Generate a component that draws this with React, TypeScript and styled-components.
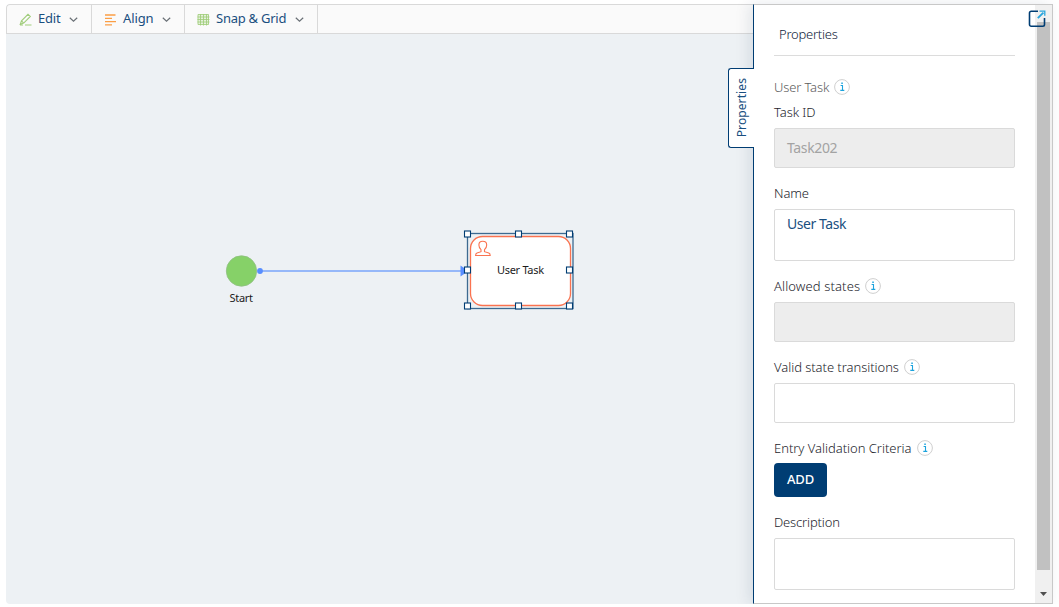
import React from "react";
import styled, { createGlobalStyle } from "styled-components";

const NAVY = "#003d73";

const GlobalStyle = createGlobalStyle`
  * { box-sizing: border-box; }
  body { margin: 0; background: #fff; font-family: "Noto Sans", sans-serif; font-weight: 300; overflow: hidden; }
`;

const Frame = styled.div`
  display: flex;
  width: 1047px;
  height: 600px;
  margin: 4px 0 0 6px;
`;

const Workspace = styled.main`
  flex: 1;
  display: flex;
  flex-direction: column;
  background: #edf1f4;
  border-radius: 4px 0 0 4px;
  overflow: hidden;
`;

const Toolbar = styled.div`
  display: flex;
  height: 30px;
  background: #fafafa;
  border: 1px solid #d9d9d9;
  border-right: 0;
  border-radius: 4px 0 0 0;
`;

const ToolButton = styled.button<{ $width: number }>`
  display: flex;
  align-items: center;
  width: ${(p) => p.$width}px;
  padding: 0 0 0 12px;
  border: 0;
  border-right: 1px solid #d9d9d9;
  background: none;
  font: 400 13px/20px "Noto Sans", sans-serif;
  color: #1a4f80;
`;

const ToolLabel = styled.span<{ $spacing: number; $width: number }>`
  width: ${(p) => p.$width}px;
  margin: 0 8px 2px 6px;
  white-space: nowrap;
  text-align: left;
  letter-spacing: ${(p) => p.$spacing}px;
`;

const Canvas = styled.div`
  position: relative;
  flex: 1;
`;

const Diagram = styled.svg`
  display: block;
  width: 747px;
  height: 570px;
  font-family: "Noto Sans", sans-serif;
  font-weight: 400;
`;

const PanelShell = styled.div`
  position: relative;
  display: flex;
  width: 300px;
`;

const Panel = styled.aside`
  display: flex;
  width: 300px;
  background: #fff;
  border: 1px solid #c8c8c8;
  border-left-color: ${NAVY};
  box-shadow: -4px 0 14px rgba(0, 40, 80, 0.1);
`;

const SideTab = styled.div`
  position: absolute;
  left: -25px;
  top: 64px;
  width: 26px;
  height: 80px;
  display: flex;
  align-items: center;
  justify-content: center;
  background: #fff;
  border: 1px solid ${NAVY};
  border-right: 0;
  border-radius: 3px 0 0 3px;
  writing-mode: vertical-rl;
  color: #1a4f80;
  font-size: 12px;
  font-weight: 400;
`;

const SideTabText = styled.span`
  transform: rotate(180deg);
  letter-spacing: 0.1px;
`;

const Content = styled.div`
  display: flex;
  flex-direction: column;
  width: 281px;
  padding: 0 20px;
`;

const Heading = styled.h2`
  flex-shrink: 0;
  margin: 0 0 21px;
  height: 51px;
  padding: 19px 0 0 5px;
  border-bottom: 1px solid #dcdcdc;
  font-size: 13px;
  font-weight: 300;
  line-height: 20px;
  letter-spacing: -0.25px;
  color: #10223a;
`;

const Field = styled.div<{ $gap?: number }>`
  display: flex;
  flex-direction: column;
  flex-shrink: 0;
  align-items: flex-start;
  gap: ${(p) => p.$gap ?? 6}px;
  margin-bottom: 15px;

  &:last-child {
    margin-bottom: 0;
  }
`;

const Label = styled.div<{ $spacing?: number; $muted?: boolean }>`
  display: flex;
  align-items: center;
  gap: 5px;
  height: 20px;
  font-size: 13px;
  white-space: nowrap;
  letter-spacing: ${(p) => p.$spacing ?? 0}px;
  color: ${(p) => (p.$muted ? "#5c5c5c" : "#1d242c")};
`;

const LabelText = styled.span`
  line-height: 18px;
  margin-bottom: 1px;
`;

const Kind = styled.div`
  margin-bottom: 5px;
`;

const Box = styled.div<{ $tall?: boolean; $disabled?: boolean; $spacing?: number }>`
  width: 241px;
  height: ${(p) => (p.$tall ? 52 : 40)}px;
  padding: ${(p) => (p.$tall ? 4 : 9)}px 12px;
  border: 1px solid #dadada;
  border-radius: 2px;
  background: ${(p) => (p.$disabled ? "#ededed" : "#fff")};
  color: ${(p) => (p.$disabled ? "#a3a3a3" : "#1a4f80")};
  font-size: 14px;
  font-weight: 400;
  line-height: 20px;
  letter-spacing: ${(p) => p.$spacing ?? 0}px;
`;

const AddButton = styled.button`
  width: 53px;
  height: 34px;
  padding: 0 0 2px;
  border: 0;
  border-radius: 4px;
  background: ${NAVY};
  color: #fff;
  font: 500 13px "Noto Sans", sans-serif;
  letter-spacing: -0.1px;
`;

const ScrollTrack = styled.div`
  display: flex;
  flex-direction: column;
  align-items: center;
  justify-content: space-between;
  width: 17px;
  padding: 17px 0 7px;
  background: #f0f0f0;
`;

const ScrollThumb = styled.div`
  width: 13px;
  height: 548px;
  background: #c1c1c1;
`;

const PopOut = styled.svg`
  position: absolute;
  left: 275px;
  top: 5px;
`;

const Chevron = () => (
  <svg width="9" height="6" viewBox="0 0 9 6" fill="none" stroke="#6a7076" strokeWidth="1.2">
    <path d="M.8 1.8l3.7 3.3L8.2 1.8" />
  </svg>
);

const PencilIcon = () => (
  <svg width="13" height="13" viewBox="0 0 13 13" fill="none" stroke="#a0cd7b" strokeWidth="1.1">
    <path d="M1.3 11.2L2.5 7.8 9 1.3l2.3 2.2-6.6 6.6zM2.5 7.8l2.2 2.3M6 12h6.5M1 12h3" />
  </svg>
);

const AlignIcon = () => (
  <svg width="13" height="13" viewBox="0 0 13 13" stroke="#fb9e45" strokeWidth="1.3">
    <path d="M1 2h10.5M1 5.3h7M1 8.6h11M1 11.9h7" />
  </svg>
);

const GridIcon = () => (
  <svg width="13" height="13" viewBox="0 0 13 13" fill="#e6f1dd" stroke="#a0cd7b" strokeWidth=".85">
    <path d="M1 1.5h10.5v10H1z" />
    <path d="M3.5 1v11.5M6.5 1v11.5M9.5 1v11.5M.5 4h12M.5 6.5h12M.5 9h12" />
  </svg>
);

const InfoIcon = () => (
  <svg width="16" height="16" viewBox="0 0 16 16" fill="none">
    <circle cx="8" cy="8" r="7.4" stroke="#cfcfcf" />
    <path d="M6.6 6.5h1.9V11M6.3 11.4h4" stroke="#1ba3dd" strokeWidth="1.1" />
    <path d="M7.3 4.3h1.5" stroke="#1ba3dd" strokeWidth="1.5" />
  </svg>
);

const handles = [
  [461, 200], [512, 200], [563, 200],
  [461, 236], [563, 236],
  [461, 272], [512, 272], [563, 272],
];

const Flow = () => (
  <Diagram viewBox="0 0 747 570">
    <circle cx="235.5" cy="237" r="15.2" fill="#86d168" stroke="#8fbf82" strokeWidth=".8" />
    <text x="235.3" y="268" fontSize="11" textAnchor="middle" fill="#1c1c1c" textLength="23.5">Start</text>
    <path d="M254 237h202" stroke="#79a5fb" strokeWidth="1.3" />
    <circle cx="254" cy="237" r="2.9" fill="#588eff" />
    <path d="M454.5 231.5l8 5.5-8 5.5z" fill="#588eff" />
    <rect x="464.5" y="202.5" width="100" height="69" rx="12" fill="#fff" stroke="#fa7350" strokeWidth="1.3" />
    <g fill="none" stroke="#fa7350" strokeWidth="1.1">
      <path d="M475 215.7c-1.7-1.7-2.1-3.2-2.1-4.8 0-2.2 1.4-3.6 3.8-3.6s4 1.4 4 3.6c0 1.8-.6 3.2-2.2 4.8v2l4.3 1.3c1 .4 1.4 1.1 1.4 2.5h-14.6c0-1.4.4-2.1 1.4-2.5l4-1.3z" />
    </g>
    <text x="514.5" y="240" fontSize="11" textAnchor="middle" fill="#1c1c1c" textLength="47">User Task</text>
    <rect x="461.5" y="199.5" width="105.5" height="75" fill="none" stroke="#3d6a91" strokeWidth="1.3" />
    {handles.map(([x, y]) => (
      <rect key={`${x}-${y}`} x={x - 2.5} y={y - 3} width="6" height="6" fill="#fff" stroke={NAVY} strokeWidth="1.1" />
    ))}
  </Diagram>
);

export default function App() {
  return (
    <>
      <GlobalStyle />
      <Frame>
        <Workspace>
          <Toolbar>
            <ToolButton $width={85}>
              <PencilIcon />
              <ToolLabel $width={23} $spacing={-0.2}>Edit</ToolLabel>
              <Chevron />
            </ToolButton>
            <ToolButton $width={93}>
              <AlignIcon />
              <ToolLabel $width={31} $spacing={-0.1}>Align</ToolLabel>
              <Chevron />
            </ToolButton>
            <ToolButton $width={133}>
              <GridIcon />
              <ToolLabel $width={71} $spacing={-0.25}>Snap &amp; Grid</ToolLabel>
              <Chevron />
            </ToolButton>
          </Toolbar>
          <Canvas>
            <Flow />
          </Canvas>
        </Workspace>
        <PanelShell>
          <Panel>
            <Content>
              <Heading>Properties</Heading>
              <Kind>
                <Label $muted $spacing={-0.15}>
                  <LabelText>User Task</LabelText>
                  <InfoIcon />
                </Label>
              </Kind>
              <Field>
                <Label $spacing={-0.1}><LabelText>Task ID</LabelText></Label>
                <Box $disabled $spacing={-0.35}>Task202</Box>
              </Field>
              <Field>
                <Label $spacing={-0.1}><LabelText>Name</LabelText></Label>
                <Box $tall $spacing={-0.45}>User Task</Box>
              </Field>
              <Field>
                <Label $spacing={0.12}><LabelText>Allowed states</LabelText><InfoIcon /></Label>
                <Box $disabled />
              </Field>
              <Field>
                <Label $spacing={-0.05}><LabelText>Valid state transitions</LabelText><InfoIcon /></Label>
                <Box />
              </Field>
              <Field $gap={5}>
                <Label $spacing={-0.03}><LabelText>Entry Validation Criteria</LabelText><InfoIcon /></Label>
                <AddButton>ADD</AddButton>
              </Field>
              <Field>
                <Label $spacing={-0.15}><LabelText>Description</LabelText></Label>
                <Box $tall />
              </Field>
            </Content>
            <ScrollTrack>
              <ScrollThumb />
              <svg width="7" height="4" viewBox="0 0 7 4"><path d="M0 0h7L3.5 4z" fill="#505050" /></svg>
            </ScrollTrack>
          </Panel>
          <SideTab><SideTabText>Properties</SideTabText></SideTab>
          <PopOut width="19" height="19" viewBox="0 0 19 19" fill="none">
            <path d="M10 2.2H3.2A1.7 1.7 0 0 0 1.5 3.9v11.7a1.7 1.7 0 0 0 1.7 1.7h11.6a1.7 1.7 0 0 0 1.7-1.7V9" stroke={NAVY} strokeWidth="1.6" />
            <path d="M9.8 9.2l5.6-5.6" stroke="#29a5dc" strokeWidth="1.9" />
            <path d="M11.5 2.2h5.3v4.6" stroke="#29a5dc" strokeWidth="1.3" />
          </PopOut>
        </PanelShell>
      </Frame>
    </>
  );
}
